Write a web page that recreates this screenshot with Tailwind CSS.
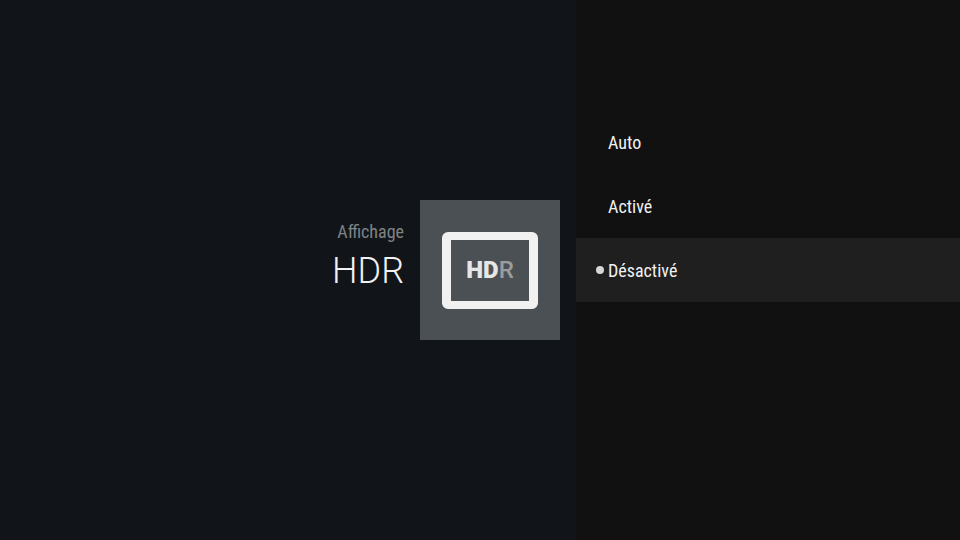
<!DOCTYPE html>
<html lang="en">
<head>
    <meta charset="UTF-8" />
    <title>HDR</title>
    <script src="https://cdn.jsdelivr.net/npm/@tailwindcss/browser@4"></script>
</head>
<body class="w-[960px] h-[540px] overflow-hidden bg-[#111519] font-['Roboto',sans-serif]">
    <div class="flex h-full">
        <!-- left: title + icon -->
        <div class="w-[576px] h-full flex items-center justify-end pr-4 gap-4">
            <div class="flex flex-col items-end pb-6">
                <div class="text-[18px] leading-[22px] font-stretch-[87%] text-[#7f8386]">Affichage</div>
                <div class="text-[36px] leading-[48px] font-light text-[#f1f1f1] mt-1">HDR</div>
            </div>
            <div class="w-[140px] h-[140px] bg-[#4b5054] flex items-center justify-center">
                <div class="w-[96px] h-[77px] border-x-[9px] border-y-[8px] border-[#f1f1f1] rounded-[6px] flex items-center justify-center">
                    <span class="text-[24px] leading-none font-black text-[#e6e6e6]">HD<span class="text-[#9a9c9e] font-medium">R</span></span>
                </div>
            </div>
        </div>
        <!-- right: options -->
        <div class="w-[384px] h-full bg-[#111111] pt-[110px]">
            <div class="h-16 flex items-center pl-8 text-[18px] font-stretch-[87%] text-[#f1f1f1]">Auto</div>
            <div class="h-16 flex items-center pl-8 text-[18px] font-stretch-[87%] text-[#f1f1f1]">Activé</div>
            <div class="relative h-16 flex items-center pl-8 text-[18px] font-stretch-[87%] text-[#f1f1f1] bg-[#1f1f1f]">
                <span class="absolute left-5 top-7 w-2 h-2 rounded-full bg-[#d6d6d6]"></span>
                Désactivé
            </div>
        </div>
    </div>
</body>
</html>
